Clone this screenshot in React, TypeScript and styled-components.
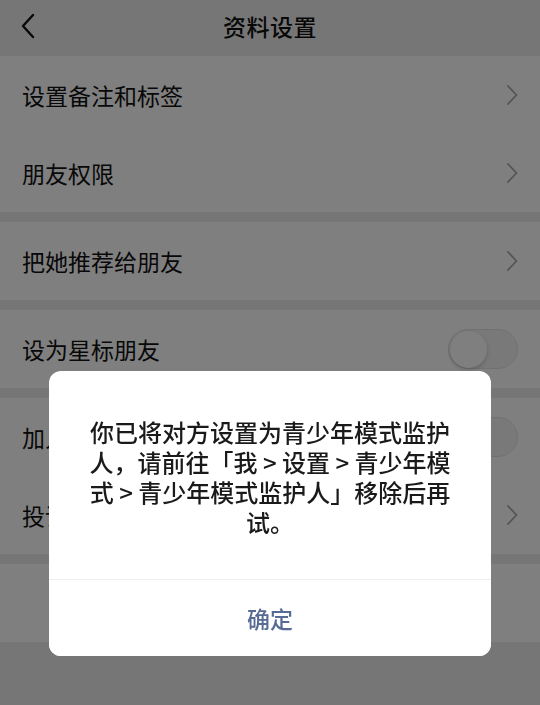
import styled, { createGlobalStyle } from 'styled-components';

const GlobalStyle = createGlobalStyle`
  html, body {
    margin: 0;
    padding: 0;
    background: #ededed;
  }
  body {
    font-family: "Noto Sans CJK SC", "Noto Sans", sans-serif;
    -webkit-font-smoothing: antialiased;
  }
`;

const Page = styled.div`
  min-height: 100vh;
  background: #ededed;
  display: flex;
  flex-direction: column;
`;

const Header = styled.header`
  height: 56px;
  padding-bottom: 4px;
  box-sizing: border-box;
  display: grid;
  grid-template-columns: 60px 1fr 60px;
  align-items: center;
  background: #ededed;
`;

const BackButton = styled.button`
  border: 0;
  background: none;
  padding: 0 0 0 20px;
  height: 52px;
  display: flex;
  align-items: center;
  cursor: pointer;
`;

const Title = styled.h1`
  margin: 0;
  text-align: center;
  font-size: 23px;
  font-weight: 500;
  color: #111;
  letter-spacing: 0.5px;
`;

const Group = styled.section`
  background: #fff;
  margin-bottom: 10px;
`;

const Row = styled.div`
  height: 78px;
  display: flex;
  align-items: center;
  justify-content: space-between;
  padding: 0 22px;
  box-sizing: border-box;
`;

const Label = styled.span`
  font-size: 23px;
  color: #111;
`;

const DangerRow = styled.div`
  height: 78px;
  display: flex;
  align-items: center;
  justify-content: center;
  font-size: 23px;
  color: #fa5151;
`;

const Track = styled.span<{ $on?: boolean }>`
  width: 70px;
  height: 40px;
  border-radius: 20px;
  box-sizing: border-box;
  border: 1.5px solid #e3e3e3;
  background: ${(p) => (p.$on ? '#07c160' : '#f2f2f2')};
  display: flex;
  align-items: center;
  padding: 0 1px;
`;

const Knob = styled.span`
  width: 37px;
  height: 37px;
  border-radius: 50%;
  background: #fff;
  box-shadow: 0 2px 4px rgba(0, 0, 0, 0.18);
`;

const Overlay = styled.div`
  position: fixed;
  inset: 0;
  background: rgba(0, 0, 0, 0.5);
  display: flex;
  flex-direction: column;
  align-items: center;
  padding-top: 371px;
  box-sizing: border-box;
`;

const Dialog = styled.div`
  width: 442px;
  background: #fff;
  border-radius: 12px;
  overflow: hidden;
`;

const Message = styled.p`
  margin: 0;
  padding: 46px 28px 42px;
  text-align: center;
  font-size: 24px;
  line-height: 30px;
  font-weight: 500;
  color: #1a1a1a;
`;

const ConfirmButton = styled.button`
  width: 100%;
  height: 77px;
  border: 0;
  border-top: 1px solid #eeeeee;
  background: #fff;
  font-family: inherit;
  font-size: 23px;
  font-weight: 500;
  color: #576b95;
  cursor: pointer;
`;

const Chevron = () => (
  <svg width="12" height="22" viewBox="0 0 12 22" fill="none">
    <path d="M2 2l8.5 9L2 20" stroke="#a8a8a8" strokeWidth="1.8" strokeLinecap="round" strokeLinejoin="round" />
  </svg>
);

const BackIcon = () => (
  <svg width="16" height="26" viewBox="0 0 16 26" fill="none">
    <path d="M13 2L3 13l10 11" stroke="#111" strokeWidth="2.4" strokeLinecap="round" strokeLinejoin="round" />
  </svg>
);

const Switch = ({ on }: { on?: boolean }) => (
  <Track $on={on}>
    <Knob />
  </Track>
);

export default function App() {
  return (
    <>
      <GlobalStyle />
      <Page>
        <Header>
          <BackButton aria-label="返回">
            <BackIcon />
          </BackButton>
          <Title>资料设置</Title>
          <span />
        </Header>

        <Group>
          <Row>
            <Label>设置备注和标签</Label>
            <Chevron />
          </Row>
          <Row>
            <Label>朋友权限</Label>
            <Chevron />
          </Row>
        </Group>

        <Group>
          <Row>
            <Label>把她推荐给朋友</Label>
            <Chevron />
          </Row>
        </Group>

        <Group>
          <Row>
            <Label>设为星标朋友</Label>
            <Switch />
          </Row>
        </Group>

        <Group>
          <Row>
            <Label>加入黑名单</Label>
            <Switch />
          </Row>
          <Row>
            <Label>投诉</Label>
            <Chevron />
          </Row>
        </Group>

        <Group>
          <DangerRow>删除</DangerRow>
        </Group>
      </Page>

      <Overlay>
        <Dialog role="alertdialog">
          <Message>
            你已将对方设置为青少年模式监护
            <br />
            人，请前往「我 &gt; 设置 &gt; 青少年模
            <br />
            式 &gt; 青少年模式监护人」移除后再
            <br />
            试。
          </Message>
          <ConfirmButton>确定</ConfirmButton>
        </Dialog>
      </Overlay>
    </>
  );
}
